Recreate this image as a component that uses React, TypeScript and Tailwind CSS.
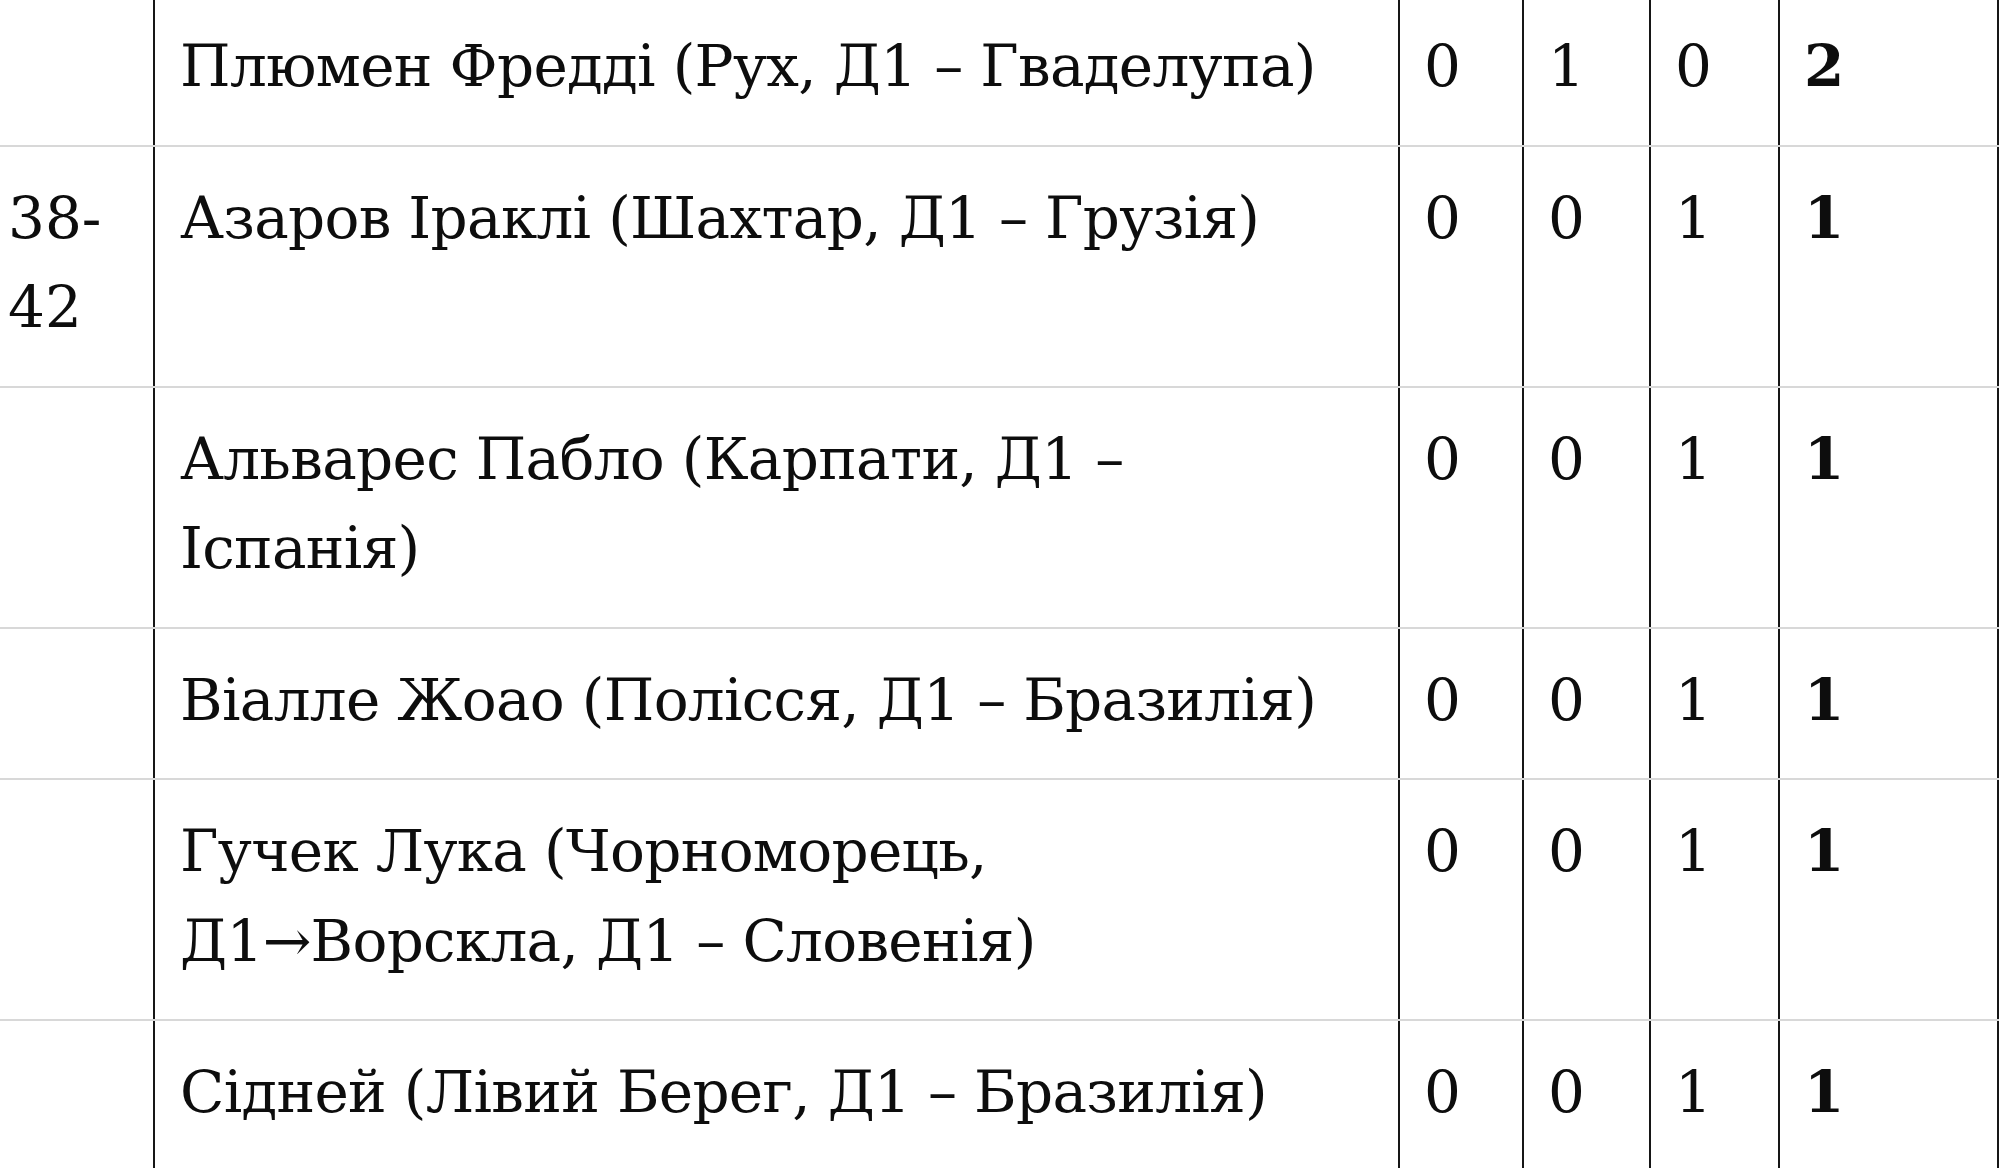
import React from "react";

type Row = {
  place?: string;
  name: React.ReactNode;
  a: number;
  b: number;
  c: number;
  total: number;
};

const rows: Row[] = [
  { name: "Плюмен Фредді (Рух, Д1 – Гваделупа)", a: 0, b: 1, c: 0, total: 2 },
  { place: "38-42", name: "Азаров Іраклі (Шахтар, Д1 – Грузія)", a: 0, b: 0, c: 1, total: 1 },
  {
    name: (
      <>
        Альварес Пабло (Карпати, Д1 –
        <br />
        Іспанія)
      </>
    ),
    a: 0,
    b: 0,
    c: 1,
    total: 1,
  },
  { name: "Віалле Жоао (Полісся, Д1 – Бразилія)", a: 0, b: 0, c: 1, total: 1 },
  {
    name: (
      <>
        Гучек Лука (Чорноморець,
        <br />
        Д1→Ворскла, Д1 – Словенія)
      </>
    ),
    a: 0,
    b: 0,
    c: 1,
    total: 1,
  },
  { name: "Сідней (Лівий Берег, Д1 – Бразилія)", a: 0, b: 0, c: 1, total: 1 },
];

const cell = "align-top border-b-2 border-b-[#d8d8d8] pt-[27px] pb-[33px]";
const num = `${cell} border-l-2 border-l-[#161616] px-[24px]`;

export default function App() {
  return (
    <div className="w-full h-[1168px] overflow-hidden bg-white text-[#0d0d0d] font-['DejaVu_Serif',serif] text-[58px] leading-[89.5px]">
      <table className="-mt-[5px] w-[1998px] table-fixed border-collapse">
        <colgroup>
          <col className="w-[154px]" />
          <col className="w-[1245px]" />
          <col className="w-[124px]" />
          <col className="w-[127px]" />
          <col className="w-[129px]" />
          <col className="w-[219px]" />
        </colgroup>
        <tbody>
          {rows.map((r, i) => (
            <tr key={i}>
              <td className={`${cell} pl-[8px] pr-[20px]`}>{r.place}</td>
              <td
                className={`${cell} border-l-2 border-l-[#161616] pl-[25px] pr-[20px] whitespace-nowrap tracking-[-0.7px]`}
              >
                {r.name}
              </td>
              <td className={num}>{r.a}</td>
              <td className={num}>{r.b}</td>
              <td className={num}>{r.c}</td>
              <td className={`${num} border-r-2 border-r-[#161616] font-bold`}>{r.total}</td>
            </tr>
          ))}
        </tbody>
      </table>
    </div>
  );
}
